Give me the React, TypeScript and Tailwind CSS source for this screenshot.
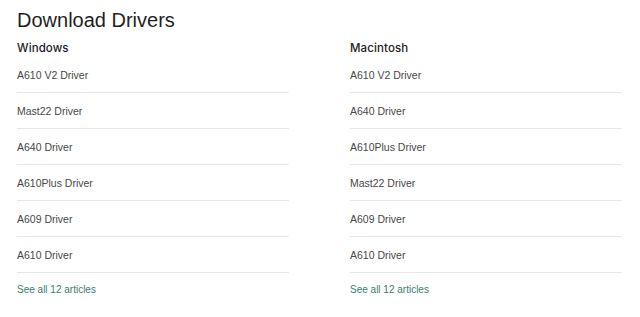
import React from "react";

const win = ["A610 V2 Driver", "Mast22 Driver", "A640 Driver", "A610Plus Driver", "A609 Driver", "A610 Driver"];
const mac = ["A610 V2 Driver", "A640 Driver", "A610Plus Driver", "Mast22 Driver", "A609 Driver", "A610 Driver"];

function Column({ title, items }: { title: string; items: string[] }) {
  return (
    <div className="w-[272px] flex flex-col">
      <div className="h-[16px] leading-[16px] text-[11.5px] font-medium text-[#222] tracking-[0.1px]" style={{ fontFamily: "Inter, 'Liberation Sans', sans-serif" }}>
        {title}
      </div>
      <div className="mt-[1px] flex flex-col">
        {items.map((it, i) => (
          <div key={i} className="h-[36px] pt-[12px] border-b border-[#e6e6e6] text-[10.5px] leading-[12px] text-[#484848]">
            {it}
          </div>
        ))}
      </div>
      <a className="mt-[11px] h-[12px] leading-[12px] text-[10px] text-[#3b7d6e]">See all 12 articles</a>
    </div>
  );
}

export default function App() {
  return (
    <div className="w-[640px] h-[317px] bg-white pl-[17px] pt-[8px]" style={{ fontFamily: "'Liberation Sans', Arial, sans-serif" }}>
      <h1 className="h-[24px] leading-[24px] text-[20px] text-[#1f1f1f]">Download Drivers</h1>
      <div className="mt-[8px] flex gap-[61px]">
        <Column title="Windows" items={win} />
        <Column title="Macintosh" items={mac} />
      </div>
    </div>
  );
}
